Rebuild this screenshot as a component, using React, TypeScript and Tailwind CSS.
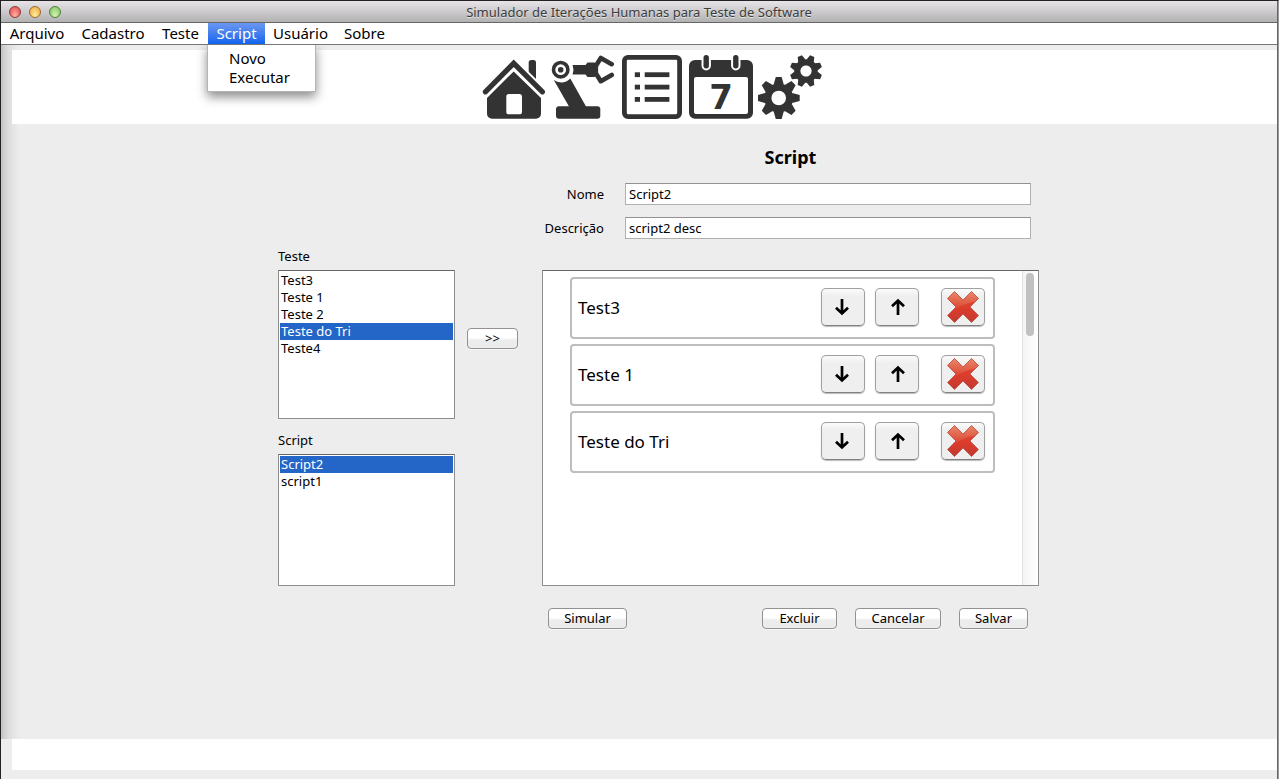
import { useState } from "react";
import type { ReactNode } from "react";

const menus = [
  { label: "Arquivo", width: "w-[72px]" },
  { label: "Cadastro", width: "w-20" },
  { label: "Teste", width: "w-[55px]" },
  { label: "Script", width: "w-[57px]", items: ["Novo", "Executar"] },
  { label: "Usuário", width: "w-[71px]" },
  { label: "Sobre", width: "w-[57px]" },
];

function HomeIcon() {
  return (
    <svg viewBox="0 0 64 64" className="size-16" fill="#333" aria-hidden="true">
      <rect x="46.7" y="5" width="7.3" height="24" rx="2.5" />
      <path d="M2.8 37.2 31.7 8.3 61 37.2" fill="none" stroke="#fff" strokeWidth="9" />
      <path d="M3.4 36.8 31.7 8.3 60.4 36.8" fill="none" stroke="#333" strokeWidth="5.2" strokeLinecap="round" />
      <path d="M31.7 16.4 59 43v15.7a5 5 0 0 1-5 5H10a5 5 0 0 1-5-5V43Z" />
      <rect x="24.3" y="39" width="15.7" height="20.3" rx="2.6" fill="#fff" />
    </svg>
  );
}

function RobotIcon() {
  return (
    <svg viewBox="0 0 64 64" className="size-16" fill="#333" aria-hidden="true">
      <circle cx="9.7" cy="14.7" r="7.2" fill="none" stroke="#333" strokeWidth="3.6" />
      <circle cx="9.7" cy="14.7" r="2.8" />
      <path d="M21.6 10H34.5L36.5 7.6H43.5L47 11V18.5L43.5 22H36.5L34.5 19.4H21.6A14 14 0 0 0 21.6 10Z" />
      <path
        d="M60.7 9.2 49.8 3 44.8 11V18.3L49.8 26.2 60.7 20"
        fill="none"
        stroke="#333"
        strokeWidth="4.6"
        strokeLinecap="round"
        strokeLinejoin="round"
      />
      <path d="M2.8 25A12.5 12.5 0 0 0 19.300 23.5L35.3 52H18.3Z" />
      <rect x="5" y="51.3" width="44.3" height="12.5" rx="3" />
    </svg>
  );
}

function ListIcon() {
  return (
    <svg viewBox="0 0 64 64" className="size-16" fill="#333" aria-hidden="true">
      <rect x="4.4" y="2.4" width="55.2" height="59.2" rx="3.5" fill="none" stroke="#333" strokeWidth="4.8" />
      {[17.3, 29.7, 42].map((y) => (
        <g key={y}>
          <rect x="14.8" y={y} width="5.2" height="4.8" />
          <rect x="24.7" y={y} width="24.7" height="4.8" />
        </g>
      ))}
    </svg>
  );
}

function CalendarIcon() {
  return (
    <svg viewBox="0 0 64 64" className="size-16" fill="#333" aria-hidden="true">
      <rect y="5" width="64" height="58.8" rx="6" />
      <rect x="5" y="22" width="54" height="37" rx="2" fill="#fff" />
      <rect x="14.5" y="-2" width="5.4" height="15.5" rx="2.7" stroke="#fff" strokeWidth="4" />
      <rect x="44.1" y="-2" width="5.4" height="15.5" rx="2.7" stroke="#fff" strokeWidth="4" />
      <rect x="14.5" y="0" width="5.4" height="13.5" rx="2.7" />
      <rect x="44.1" y="0" width="5.4" height="13.5" rx="2.7" />
      <text x="32" y="54" textAnchor="middle" fontFamily="DejaVu Sans, sans-serif" fontWeight="700" fontSize="34">
        7
      </text>
    </svg>
  );
}

function Gear({ cx, cy, outer, body, hole, turn }: { cx: number; cy: number; outer: number; body: number; hole: number; turn: number }) {
  const base = outer * 0.24;
  const tip = outer * 0.14;
  return (
    <g transform={`translate(${cx} ${cy}) rotate(${turn})`}>
      <circle r={(body + hole) / 2} fill="none" stroke="#333" strokeWidth={body - hole} />
      {[0, 45, 90, 135, 180, 225, 270, 315].map((a) => (
        <path key={a} transform={`rotate(${a})`} d={`M${-base} ${1 - body}L${-tip} ${-outer}H${tip}L${base} ${1 - body}Z`} />
      ))}
    </g>
  );
}

function GearsIcon() {
  return (
    <svg viewBox="0 0 64 64" className="size-16" fill="#333" aria-hidden="true">
      <Gear cx={20.7} cy={43} outer={21} body={14.5} hole={7.3} turn={0} />
      <Gear cx={48} cy={16} outer={16.2} body={11.8} hole={5.6} turn={22.5} />
    </svg>
  );
}

function Arrow({ up }: { up?: boolean }) {
  return (
    <svg viewBox="0 0 16 18" className="h-[18px] w-4" fill="none" stroke="#000" strokeWidth="2.7" aria-hidden="true">
      {up ? <path d="M9 17V2.5M3 8.2 9 2.5 15 8.2" /> : <path d="M7 1V15.5M1 9.8 7 15.5 13 9.8" />}
    </svg>
  );
}

const crossShape = "M7.5 .5 16 9 24.5 .5 31.5 7.5 23 16 31.5 24.5 24.5 31.5 16 23 7.5 31.5 .5 24.5 9 16 .5 7.5Z";

function Cross() {
  return (
    <svg viewBox="0 0 32 32" className="size-8" aria-hidden="true">
      <defs>
        <linearGradient id="cross-base" x1="0" y1="0" x2="0" y2="1">
          <stop offset="0" stopColor="#e2523c" />
          <stop offset="0.55" stopColor="#dc3c2c" />
          <stop offset="1" stopColor="#bf3a2f" />
        </linearGradient>
        <linearGradient id="cross-shine" x1="0" y1="0" x2="0" y2="1">
          <stop offset="0" stopColor="#e8896c" />
          <stop offset="1" stopColor="#de4a36" />
        </linearGradient>
        <clipPath id="cross-clip">
          <path d={crossShape} />
        </clipPath>
      </defs>
      <g clipPath="url(#cross-clip)">
        <rect width="32" height="32" fill="url(#cross-base)" />
        <path d="M0 0h32v10q-11 1-22 7H0Z" fill="url(#cross-shine)" />
      </g>
      <path d={crossShape} fill="none" stroke="#b8453a" strokeWidth="0.7" />
    </svg>
  );
}

function PushButton({ children, width }: { children: ReactNode; width: string }) {
  return (
    <button
      type="button"
      className={`${width} block h-[21px] rounded-[4px] border border-[#929292] bg-linear-to-b from-white from-45% to-[#ececec] to-60% text-[13px] leading-[19px] shadow-[0_1px_0_#f8f8f8]`}
    >
      {children}
    </button>
  );
}

function SquareButton({ label, children }: { label: string; children: ReactNode }) {
  return (
    <button
      type="button"
      aria-label={label}
      className="flex h-[38px] w-11 items-center justify-center rounded-[5px] border border-[#a0a0a0] border-b-[#808080] bg-linear-to-b from-[#fbfbfb] to-[#efefef] to-20% shadow-[0_1px_1px_#bbb]"
    >
      {children}
    </button>
  );
}

function ListBox({ label, items, initial, height }: { label: string; items: string[]; initial: string; height: string }) {
  const [selected, setSelected] = useState(initial);
  return (
    <section>
      <h2 className="h-6 text-[13px] leading-5">{label}</h2>
      <ul role="listbox" aria-label={label} className={`${height} border border-[#8e8e8e] border-t-[#666] bg-white p-px`}>
        {items.map((item) => (
          <li key={item} role="option" aria-selected={item === selected}>
            <button
              type="button"
              onClick={() => setSelected(item)}
              className={`block h-[17px] w-full px-px text-left text-[13px] leading-[17px] ${item === selected ? "bg-[#2466c8] text-white" : ""}`}
            >
              {item}
            </button>
          </li>
        ))}
      </ul>
    </section>
  );
}

function Field({ id, label, value }: { id: string; label: string; value: string }) {
  return (
    <div className="flex items-center">
      <label htmlFor={id} className="h-[22px] w-[62px] text-right text-[13px] leading-[22px] whitespace-nowrap">
        {label}
      </label>
      <input
        id={id}
        defaultValue={value}
        className="mr-2 ml-[21px] h-[22px] min-w-0 flex-1 border border-[#b0b0b0] border-t-[#929292] bg-white px-[3px] text-[13px]"
      />
    </div>
  );
}

export default function App() {
  const tools = [
    { label: "Início", icon: <HomeIcon /> },
    { label: "Robô", icon: <RobotIcon /> },
    { label: "Lista", icon: <ListIcon /> },
    { label: "Agenda", icon: <CalendarIcon /> },
    { label: "Configurações", icon: <GearsIcon /> },
  ];

  return (
    <div className="flex min-h-screen flex-col border-t border-r border-l border-[#222] border-r-[#999] bg-[#ededed] font-['Noto_Sans',sans-serif] text-black">
      <div className="flex min-h-0 flex-1 flex-col border-r border-[#666]">
        <header className="relative flex h-[22px] items-center justify-center border-b border-[#666] bg-linear-to-b from-[#e8e4e8] to-[#b2b2b2]">
          <div className="absolute left-2 flex gap-2">
            <button type="button" aria-label="Fechar" className="size-3 rounded-full border border-[#8f3a38] bg-radial-[at_50%_85%] from-[#ffb3ac] to-[#e0413f]" />
            <button type="button" aria-label="Minimizar" className="size-3 rounded-full border border-[#9a6a2a] bg-radial-[at_50%_85%] from-[#ffee9c] to-[#eda53a]" />
            <button type="button" aria-label="Ampliar" className="size-3 rounded-full border border-[#4f7f3c] bg-radial-[at_50%_85%] from-[#d5f5b0] to-[#7bbf5c]" />
          </div>
          <h1 className="text-[13px] leading-5 text-[#3c3c3c] [text-shadow:0_1px_0_#e4e4e4]">Simulador de Iterações Humanas para Teste de Software</h1>
        </header>

        <nav className="flex h-[22px] border-b border-[#777] bg-white text-[15px]">
          {menus.map((menu) => (
            <div key={menu.label} className="relative">
              <button
                type="button"
                className={`${menu.width} block h-[21px] text-center leading-[21px] ${menu.items ? "bg-linear-to-b from-[#6a97f0] to-[#0a63ee] text-white" : ""}`}
              >
                {menu.label}
              </button>
              {menu.items && (
                <ul className="absolute top-[22px] left-0 z-10 w-[107px] bg-white pt-1 pb-1 shadow-[0_0_0_1px_#b5b5b5,0_5px_10px_1px_rgba(0,0,0,0.45)] [clip-path:inset(0_-20px_-20px_-20px)]">
                  {menu.items.map((item) => (
                    <li key={item}>
                      <button type="button" className="block h-[19px] w-full pl-[21px] text-left leading-[19px]">
                        {item}
                      </button>
                    </li>
                  ))}
                </ul>
              )}
            </div>
          ))}
        </nav>

        <div className="flex flex-1 flex-col bg-[linear-gradient(to_right,#c4c4c4_0px,#dcdcdc_7px,#ededed_18px)] pt-[5px] pl-[11px]">
          <div className="flex h-[74px] items-center justify-center gap-[5px] bg-white pl-[15px]">
            {tools.map((tool) => (
              <button key={tool.label} type="button" aria-label={tool.label}>
                {tool.icon}
              </button>
            ))}
          </div>

          <main className="mx-auto flex w-full max-w-[789px] items-start pt-[21px] pb-10 pl-7">
            <div className="flex w-[177px] flex-col gap-[11px] pt-[101px]">
              <ListBox label="Teste" items={["Test3", "Teste 1", "Teste 2", "Teste do Tri", "Teste4"]} initial="Teste do Tri" height="h-[149px]" />
              <ListBox label="Script" items={["Script2", "script1"]} initial="Script2" height="h-[132px]" />
            </div>

            <div className="mr-6 ml-3 pt-[183px]">
              <PushButton width="w-[51px]">&gt;&gt;</PushButton>
            </div>

            <section className="flex min-w-0 flex-1 flex-col">
              <h2 className="text-center text-[18px] leading-6 font-bold">Script</h2>
              <form className="mt-[14px] flex flex-col gap-3" onSubmit={(e) => e.preventDefault()}>
                <Field id="nome" label="Nome" value="Script2" />
                <Field id="descricao" label="Descrição" value="script2 desc" />
              </form>

              <div className="mt-[31px] flex h-[316px] border border-[#8e8e8e] border-t-[#666] bg-white">
                <ul className="flex flex-1 flex-col gap-[5px] pt-[6px] pr-[27px] pl-[27px]">
                  {["Test3", "Teste 1", "Teste do Tri"].map((step) => (
                    <li key={step} className="flex h-[62px] items-start rounded-[4px] border-2 border-[#bdbdbd] pt-[9px] pr-2 pl-[6px]">
                      <span className="flex-1 text-[17px] leading-10">{step}</span>
                      <div className="flex gap-[10px]">
                        <SquareButton label={`Descer ${step}`}>
                          <Arrow />
                        </SquareButton>
                        <SquareButton label={`Subir ${step}`}>
                          <Arrow up />
                        </SquareButton>
                      </div>
                      <div className="ml-[22px]">
                        <SquareButton label={`Remover ${step}`}>
                          <Cross />
                        </SquareButton>
                      </div>
                    </li>
                  ))}
                </ul>
                <div className="w-4 border-l border-[#e2e2e2] bg-linear-to-r from-[#f4f4f4] to-white pt-[2px] pl-[3px]">
                  <div className="h-[63px] w-2 rounded-full bg-[#c1c1c1]" />
                </div>
              </div>

              <div className="mt-[22px] flex gap-[18px] pr-[11px] pl-[6px]">
                <div className="flex-1">
                  <PushButton width="w-[79px]">Simular</PushButton>
                </div>
                <PushButton width="w-[75px]">Excluir</PushButton>
                <PushButton width="w-[86px]">Cancelar</PushButton>
                <PushButton width="w-[69px]">Salvar</PushButton>
              </div>
            </section>
          </main>
        </div>

        <footer className="bg-[#ededed] pb-[9px] pl-[11px]">
          <div className="h-[31px] bg-white" />
        </footer>
      </div>
    </div>
  );
}
